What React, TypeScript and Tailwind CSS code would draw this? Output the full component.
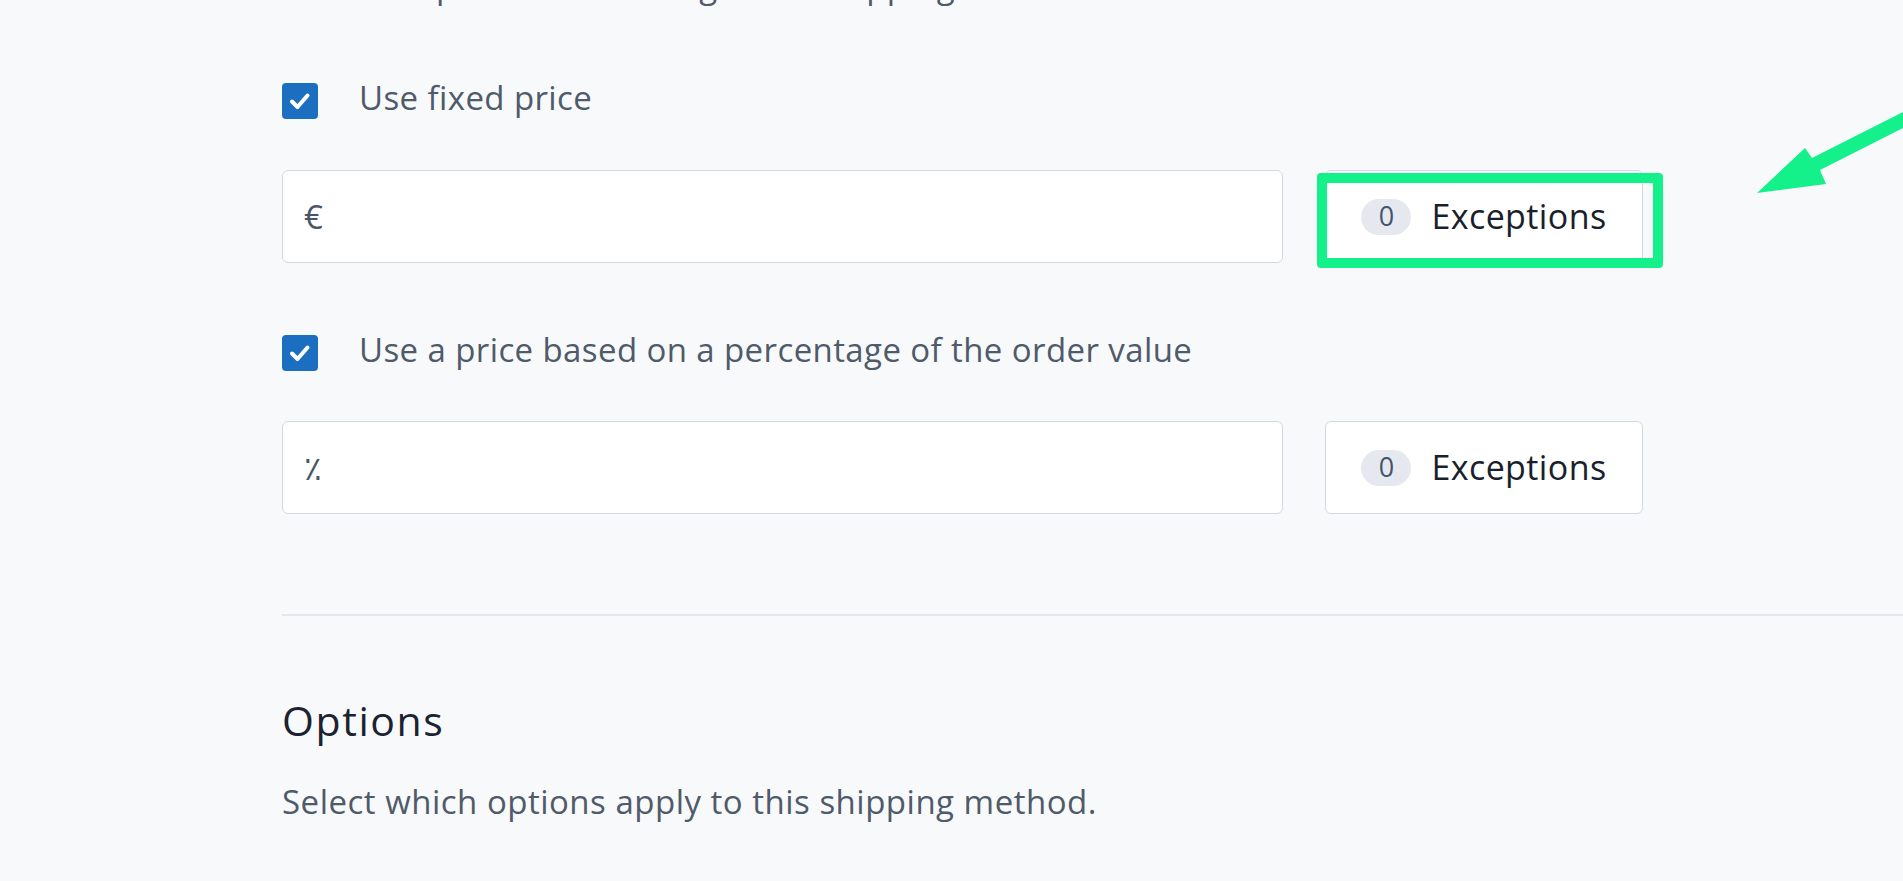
import React from "react";

const sans = { fontFamily: '"Open Sans", "Liberation Sans", Arial, sans-serif' };

function CheckBox() {
  return (
    <span className="flex h-[36px] w-[36px] shrink-0 items-center justify-center rounded-[4px] bg-[#1c6fc0]">
      <svg width="28" height="28" viewBox="0 0 28 28" fill="none">
        <polyline points="6,14.5 11.5,20 21.5,8.5" stroke="#ffffff" strokeWidth="4" strokeLinecap="round" strokeLinejoin="round" />
      </svg>
    </span>
  );
}

function CheckRow({ label }: { label: string }) {
  return (
    <label className="flex h-[36px] items-center gap-[41px]">
      <CheckBox />
      <span className="mb-[7px] text-[33px] leading-none tracking-[0.4px] text-[#4f5a6a]" style={sans}>
        {label}
      </span>
    </label>
  );
}

function ExceptionsButton({ highlighted }: { highlighted?: boolean }) {
  return (
    <div className="relative">
      <button
        type="button"
        className="flex h-[93px] w-[318px] items-center justify-center gap-[20px] rounded-[6px] border border-[#d3d9e1] bg-white"
      >
        <span
          className="flex h-[36px] w-[50px] items-center justify-center rounded-full bg-[#e5e9ef] text-[27px] font-medium text-[#44546a]"
          style={sans}
        >
          0
        </span>
        <span className="text-[34px] tracking-[0.4px] text-[#1a1f2b]" style={sans}>
          Exceptions
        </span>
      </button>
      {highlighted && (
        <span className="pointer-events-none absolute left-[-8px] right-[-20px] top-[3px] bottom-[-5px] rounded-[4px] border-[10px] border-[#14f08a]" />
      )}
    </div>
  );
}

function PriceRow({ unit, highlighted }: { unit: string; highlighted?: boolean }) {
  return (
    <div className="flex items-center gap-[42px]">
      <div className="flex h-[93px] w-[1001px] items-center rounded-[6px] border border-[#d3d9e1] bg-white pl-[21px]">
        <span className="text-[33px] text-[#4a5568]" style={sans}>
          {unit}
        </span>
      </div>
      <ExceptionsButton highlighted={highlighted} />
    </div>
  );
}

export default function App() {
  return (
    <div className="relative h-[881px] overflow-hidden bg-[#f8f9fb]">
      <div className="flex flex-col pl-[282px]">
        <p className="mt-[-34px] h-[40px] text-[33px] leading-[40px] tracking-[0.4px] text-[#4f5a6a]" style={sans}>
          Enter the price that is charged for shipping.
        </p>

        <div className="mt-[77px]">
          <CheckRow label="Use fixed price" />
        </div>
        <div className="mt-[51px]">
          <PriceRow unit="€" highlighted />
        </div>

        <div className="mt-[72px]">
          <CheckRow label="Use a price based on a percentage of the order value" />
        </div>
        <div className="mt-[50px]">
          <PriceRow unit="٪" />
        </div>

        <div className="mt-[100px] h-[2px] bg-[#e3e7ec]" />

        <h2 className="mt-[81px] text-[41px] leading-[46px] tracking-[1.6px] text-[#1b2230]" style={sans}>
          Options
        </h2>
        <p className="mt-[39px] text-[33px] leading-[40px] tracking-[0.5px] text-[#4f5a6a]" style={sans}>
          Select which options apply to this shipping method.
        </p>
      </div>

      {/* annotation arrow pointing at the highlighted button */}
      <svg className="pointer-events-none absolute left-0 top-0" width="1903" height="881" viewBox="0 0 1903 881">
        <polygon
          points="1757,193 1805,148 1812,158 1903,112 1903,128 1820,170 1826,184"
          fill="#14f08a"
          strokeLinejoin="round"
        />
      </svg>
    </div>
  );
}
